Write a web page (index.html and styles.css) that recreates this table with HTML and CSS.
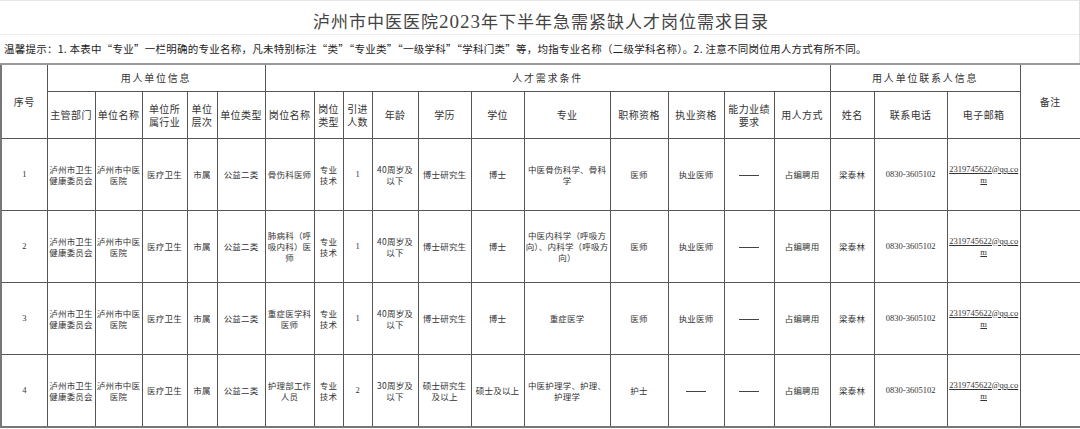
FILE: index.html
```html
<!DOCTYPE html>
<html lang="zh-CN">
<head>
<meta charset="utf-8">
<title>泸州市中医医院2023年下半年急需紧缺人才岗位需求目录</title>
<link rel="stylesheet" href="styles.css">
</head>
<body>
<div class="sheet">
  <div class="head-box">
    <h1 class="title">泸州市中医医院<span class="num">2023</span>年下半年急需紧缺人才岗位需求目录</h1>
    <p class="notice">温馨提示：1. 本表中“专业”一栏明确的专业名称，凡未特别标注“类”“专业类”“一级学科”“学科门类”等，均指专业名称（二级学科名称）。2. 注意不同岗位用人方式有所不同。</p>
  </div>
  <table class="grid">
    <colgroup>
      <col style="width:46px"><col style="width:48px"><col style="width:47px"><col style="width:45px"><col style="width:30px"><col style="width:48px"><col style="width:49px"><col style="width:29px"><col style="width:29px"><col style="width:46px"><col style="width:53px"><col style="width:53px"><col style="width:86px"><col style="width:58px"><col style="width:56px"><col style="width:50px"><col style="width:56px"><col style="width:44px"><col style="width:73px"><col style="width:73px"><col style="width:60px">
    </colgroup>
    <thead>
      <tr class="h1">
        <th rowspan="2">序号</th>
        <th colspan="5" class="wide">用人单位信息</th>
        <th colspan="11" class="wide">人才需求条件</th>
        <th colspan="3" class="wide">用人单位联系人信息</th>
        <th rowspan="2">备注</th>
      </tr>
      <tr class="h2">
        <th>主管部门</th><th>单位名称</th><th>单位所<br>属行业</th><th>单位层次</th><th>单位类型</th>
        <th>岗位名称</th><th>岗位类型</th><th>引进人数</th><th>年龄</th><th>学历</th><th>学位</th><th>专业</th><th>职称资格</th><th>执业资格</th><th>能力业绩要求</th><th>用人方式</th>
        <th>姓名</th><th>联系电话</th><th>电子邮箱</th>
      </tr>
    </thead>
    <tbody>
      <tr>
        <td class="serif">1</td><td>泸州市卫生健康委员会</td><td>泸州市中医医院</td><td>医疗卫生</td><td>市属</td><td>公益二类</td>
        <td>骨伤科医师</td><td>专业技术</td><td class="serif">1</td><td>40周岁及以下</td><td>博士研究生</td><td>博士</td><td>中医骨伤科学、骨科学</td><td>医师</td><td>执业医师</td><td><span class="dash"></span></td><td>占编聘用</td>
        <td>梁泰林</td><td class="serif">0830-3605102</td><td class="serif mail"><span>2319745622@qq.com</span></td><td></td>
      </tr>
      <tr>
        <td class="serif">2</td><td>泸州市卫生健康委员会</td><td>泸州市中医医院</td><td>医疗卫生</td><td>市属</td><td>公益二类</td>
        <td>肺病科（呼吸内科）医师</td><td>专业技术</td><td class="serif">1</td><td>40周岁及以下</td><td>博士研究生</td><td>博士</td><td>中医内科学（呼吸方向）、内科学（呼吸方向）</td><td>医师</td><td>执业医师</td><td><span class="dash"></span></td><td>占编聘用</td>
        <td>梁泰林</td><td class="serif">0830-3605102</td><td class="serif mail"><span>2319745622@qq.com</span></td><td></td>
      </tr>
      <tr>
        <td class="serif">3</td><td>泸州市卫生健康委员会</td><td>泸州市中医医院</td><td>医疗卫生</td><td>市属</td><td>公益二类</td>
        <td>重症医学科医师</td><td>专业技术</td><td class="serif">1</td><td>40周岁及以下</td><td>博士研究生</td><td>博士</td><td>重症医学</td><td>医师</td><td>执业医师</td><td><span class="dash"></span></td><td>占编聘用</td>
        <td>梁泰林</td><td class="serif">0830-3605102</td><td class="serif mail"><span>2319745622@qq.com</span></td><td></td>
      </tr>
      <tr>
        <td class="serif">4</td><td>泸州市卫生健康委员会</td><td>泸州市中医医院</td><td>医疗卫生</td><td>市属</td><td>公益二类</td>
        <td>护理部工作人员</td><td>专业技术</td><td class="serif">2</td><td>30周岁及以下</td><td>硕士研究生及以上</td><td>硕士及以上</td><td>中医护理学、护理、护理学</td><td>护士</td><td><span class="dash"></span></td><td><span class="dash"></span></td><td>占编聘用</td>
        <td>梁泰林</td><td class="serif">0830-3605102</td><td class="serif mail"><span>2319745622@qq.com</span></td><td></td>
      </tr>
    </tbody>
  </table>
</div>
</body>
</html>
```

FILE: styles.css
```css
html, body {
  margin: 0;
  padding: 0;
  background: #fff;
}

body {
  width: 1080px;
  height: 429px;
  overflow: hidden;
  font-family: "Noto Sans CJK SC", "Noto Sans", sans-serif;
  color: #333;
}

.sheet {
  width: 1080px;
}

.head-box {
  border-top: 1px solid #e6e6e6;
  border-right: 1px solid #e0e0e0;
  height: 63px;
  box-sizing: border-box;
}

.title {
  margin: 0;
  height: 34px;
  line-height: 40px;
  border-bottom: 1px solid #ececec;
  box-sizing: border-box;
  text-align: center;
  font-family: "Noto Sans CJK SC", sans-serif;
  font-weight: 400;
  font-size: 17px;
  letter-spacing: 1px;
  color: #444;
  padding-left: 3px;
}

.title .num {
  font-family: "Liberation Serif", serif;
  font-size: 19px;
}

.notice {
  margin: 0;
  padding: 5px 0 0 4px;
  font-size: 10.5px;
  line-height: 18px;
  color: #222;
  white-space: nowrap;
  letter-spacing: 0.25px;
}

.grid {
  border-collapse: collapse;
  table-layout: fixed;
  width: 1079px;
  border-top: 2px solid #999;
  border-left: 2px solid #777;
  border-bottom: 2px solid #777;
}

.grid th,
.grid td {
  border: 1px solid #555;
  padding: 0 1px;
  text-align: center;
  vertical-align: middle;
  overflow: hidden;
}

.grid th {
  font-weight: 400;
  font-size: 10px;
  line-height: 13.5px;
  letter-spacing: 0.4px;
  color: #333;
}

.grid th.wide {
  letter-spacing: 1.8px;
}

.h1 th {
  height: 26px;
}

.h2 th {
  height: 46px;
}

.grid td {
  height: 71px;
  font-size: 8.5px;
  line-height: 11px;
  letter-spacing: 0.2px;
  color: #333;
}

.grid td.serif {
  font-family: "Liberation Serif", serif;
  font-size: 8.5px;
  letter-spacing: 0;
}

.grid td.mail {
  word-break: break-all;
  padding: 0;
}

.mail span {
  text-decoration: underline;
}

.dash {
  display: inline-block;
  width: 20px;
  height: 1px;
  background: #444;
  vertical-align: middle;
}
```
